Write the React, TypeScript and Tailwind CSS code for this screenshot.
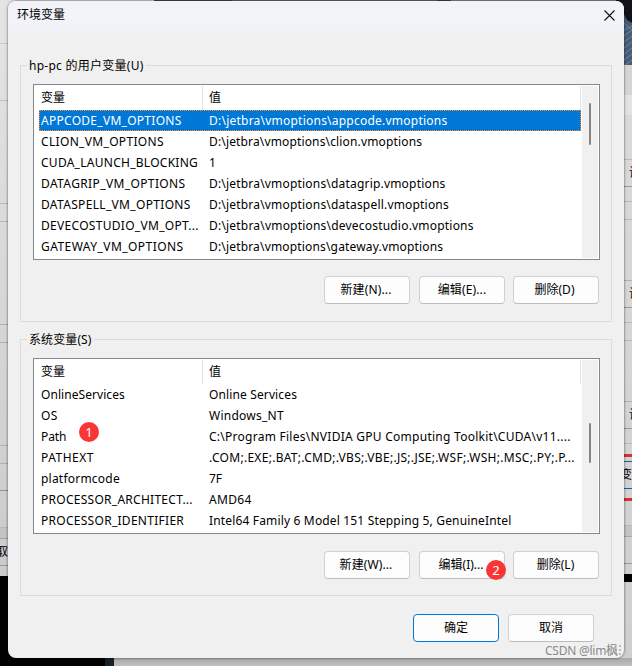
import clsx from "clsx";

type Variable = {
  name: string;
  value: string;
  nameClass?: string;
  valueClass?: string;
};

const userVariables: Variable[] = [
  {
    name: "APPCODE_VM_OPTIONS",
    value: "D:\\jetbra\\vmoptions\\appcode.vmoptions",
    nameClass: "tracking-[0.28px]",
    valueClass: "tracking-[0.23px]",
  },
  {
    name: "CLION_VM_OPTIONS",
    value: "D:\\jetbra\\vmoptions\\clion.vmoptions",
    nameClass: "tracking-[0.33px]",
    valueClass: "tracking-[0.15px]",
  },
  { name: "CUDA_LAUNCH_BLOCKING", value: "1", nameClass: "tracking-[0.27px]" },
  {
    name: "DATAGRIP_VM_OPTIONS",
    value: "D:\\jetbra\\vmoptions\\datagrip.vmoptions",
    nameClass: "tracking-[0.38px]",
    valueClass: "tracking-[0.19px]",
  },
  {
    name: "DATASPELL_VM_OPTIONS",
    value: "D:\\jetbra\\vmoptions\\dataspell.vmoptions",
    nameClass: "tracking-[0.33px]",
    valueClass: "tracking-[0.19px]",
  },
  {
    name: "DEVECOSTUDIO_VM_OPT...",
    value: "D:\\jetbra\\vmoptions\\devecostudio.vmoptions",
    nameClass: "tracking-[0.3px]",
    valueClass: "tracking-[0.2px]",
  },
  {
    name: "GATEWAY_VM_OPTIONS",
    value: "D:\\jetbra\\vmoptions\\gateway.vmoptions",
    nameClass: "tracking-[0.45px]",
    valueClass: "tracking-[0.17px]",
  },
];

const systemVariables: Variable[] = [
  {
    name: "OnlineServices",
    value: "Online Services",
    nameClass: "tracking-[0.06px]",
    valueClass: "tracking-[0.13px]",
  },
  { name: "OS", value: "Windows_NT", nameClass: "tracking-[0.4px]", valueClass: "tracking-[0.25px]" },
  {
    name: "Path",
    value: "C:\\Program Files\\NVIDIA GPU Computing Toolkit\\CUDA\\v11....",
    nameClass: "tracking-[-0.1px]",
    valueClass: "tracking-[0.26px]",
  },
  {
    name: "PATHEXT",
    value: ".COM;.EXE;.BAT;.CMD;.VBS;.VBE;.JS;.JSE;.WSF;.WSH;.MSC;.PY;.P...",
    nameClass: "tracking-[0.5px]",
    valueClass: "tracking-[0.29px]",
  },
  { name: "platformcode", value: "7F", nameClass: "tracking-[0.22px]" },
  {
    name: "PROCESSOR_ARCHITECT...",
    value: "AMD64",
    nameClass: "tracking-[0.27px]",
    valueClass: "tracking-[0.3px]",
  },
  {
    name: "PROCESSOR_IDENTIFIER",
    value: "Intel64 Family 6 Model 151 Stepping 5, GenuineIntel",
    nameClass: "tracking-[0.28px]",
    valueClass: "tracking-[0.16px]",
  },
];

const DialogButton = ({
  label,
  primary,
  className,
}: {
  label: string;
  primary?: boolean;
  className?: string;
}) => (
  <button
    type="button"
    className={clsx(
      "h-7 w-[86px] rounded border bg-[#fdfdfd] pb-px text-center leading-none whitespace-nowrap",
      primary ? "border-[#0078d4]" : "border-[#d0d0d0] border-b-[#bcbcbc]",
      className
    )}
  >
    {label}
  </button>
);

const VariableList = ({
  items,
  selected,
  thumbClass,
}: {
  items: Variable[];
  selected?: string;
  thumbClass: string;
}) => (
  <div className="flex h-44 w-[567px] border border-[#828790] bg-white p-px">
    <div className="w-[547px] pl-1">
      {/* Column headers */}
      <div className="flex h-6">
        <div className="w-[164px] border-r border-[#e5e5e5] pl-0.5 leading-[23px]">变量</div>
        <div className="w-[378px] border-r border-[#e5e5e5] pl-1.5 leading-[23px]">值</div>
      </div>
      {items.map((item) => (
        <div
          key={item.name}
          className={clsx(
            "flex h-[21px] w-[542px] leading-[22px] whitespace-pre",
            item.name === selected &&
              "bg-[#0078d7] text-white outline-1 -outline-offset-1 outline-dotted outline-[#ff8728]"
          )}
        >
          <div className="w-[170px] pl-0.5">
            <span className={item.nameClass}>{item.name}</span>
          </div>
          <div>
            <span className={item.valueClass}>{item.value}</span>
          </div>
        </div>
      ))}
    </div>
    {/* Scrollbar */}
    <div className="flex w-4 justify-center bg-[#f0f0f0]">
      <div className={clsx("w-0.5 rounded-full bg-[#858585]", thumbClass)} />
    </div>
  </div>
);

const Marker = ({ children, className }: { children: string; className: string }) => (
  <div
    className={clsx(
      "absolute flex size-5 items-center justify-center rounded-full bg-[#fb3434] text-[13px] leading-none text-white",
      className
    )}
  >
    {children}
  </div>
);

// Slices of the windows that lie behind the dialog
const Backdrop = () => (
  <div className="absolute inset-0 flex flex-col bg-[#d0d0d0]">
    <div className="flex h-[658px] justify-between">
      <div className="flex w-4 flex-col bg-linear-to-b from-[#e4e4e4] to-[#c8c8c8]">
        <div className="h-11 border-b border-[#cbcbcb]" />
        <div className="h-[57px] border-b border-[#bfbfbf]" />
        <div className="h-[103px] border-b border-[#b8b8b8]" />
        <div className="h-[18px] border-b border-[#b8b8b8]" />
        <div className="h-[103px] border-b border-[#b0b0b0]" />
        <div className="h-[18px] border-b border-[#b0b0b0]" />
        <div className="h-[103px] border-b border-[#b0b0b0]" />
        <div className="h-[18px] border-b border-[#b0b0b0]" />
        <div className="h-[27px] border-b border-[#909090]" />
        <div className="h-[37px] border-b border-[#b8b8b8]" />
        <div className="h-[11px] border-b border-[#a0a0a0] bg-[#c4c4c4]" />
        <div className="h-[27px] overflow-hidden border-b border-[#999] pt-1 leading-[18px]">
          <span className="-ml-1">取</span>
        </div>
        <div className="h-[10px]" />
        <div className="grow bg-black" />
      </div>
      <div className="flex h-px grow">
        <div className="w-[138px] bg-[#d8d8d8]" />
        <div className="w-[78px] bg-[#45404a]" />
        <div className="w-[205px] bg-[#5b6880]" />
        <div className="w-3.5 bg-[#40404e]" />
        <div className="grow bg-[#8a8890]" />
      </div>
      <div className="flex w-4 flex-col bg-linear-to-b from-[#dcdcdc] to-[#cfcfcf] pl-2">
        <svg className="-ml-2 h-[65px] w-4 shrink-0" viewBox="0 0 16 65">
          <rect width="16" height="65" fill="#485c78" />
          <path d="M0 0h16v23l-5-3-4-8-7-9z" fill="#111219" />
          <path
            d="M8 23l8 7M8 30l8-4M8 36l8-6M8 42l8-6M8 48l8-6M8 54l8-6M8 60l8-6M9 65l7-5"
            stroke="#70839c"
            strokeWidth="1"
          />
        </svg>
        <div className="h-[30px] bg-[#d5d5d5]" />
        <div className="h-5 bg-[#e3e3e3]" />
        <div className="h-[45px] border-b border-[#b8b8b8]" />
        <div className="h-[27px] overflow-hidden border-b border-[#999] pl-[5px] leading-[25px]">设</div>
        <div className="h-[15px] border-b border-[#b8b8b8]" />
        <div className="h-[18px] border-b border-[#b8b8b8]" />
        <div className="h-[61px] border-b border-[#b0b0b0]" />
        <div className="h-[27px] overflow-hidden border-b border-[#999] pl-[5px] leading-[25px]">设</div>
        <div className="h-[15px] border-b border-[#b8b8b8]" />
        <div className="h-[18px] border-b border-[#b8b8b8]" />
        <div className="h-[61px] border-b border-[#b0b0b0]" />
        <div className="h-[27px] overflow-hidden border-b border-[#999] pl-[5px] leading-[25px]">设</div>
        <div className="h-[15px] border-b border-[#b8b8b8]" />
        <div className="h-[10px]" />
        <div className="h-[3px] bg-[#dc2f33]" />
        <div className="h-1" />
        <div className="h-7 overflow-hidden border-y border-[#1464a8] leading-[26px]">
          <span className="-ml-1">变</span>
        </div>
        <div className="h-[9px]" />
        <div className="h-[3px] bg-[#dc2f33]" />
        <div className="h-[25px] border-b border-[#b8b8b8]" />
        <div className="h-[11px] border-b border-[#a8a8a8] bg-[#c4c4c4]" />
        <div className="h-[27px] border-b border-[#999]" />
        <div className="h-[10px]" />
        <div className="h-2 bg-black" />
      </div>
    </div>
    <div className="flex h-2">
      <div className="w-[105px] bg-black" />
      <div className="w-[9px] bg-[#17212b]" />
      <div className="grow bg-linear-to-b from-[#a9a9a9] to-[#c0c0c0]" />
    </div>
  </div>
);

export default function App() {
  return (
    <div className="relative h-[666px] w-[632px] overflow-hidden pt-px pl-2 font-['Noto_Sans','Noto_Sans_CJK_SC',sans-serif] text-[12px] text-black">
      <Backdrop />
      <div className="relative flex h-[657px] w-[616px] flex-col rounded-lg bg-[#f0f0f0] shadow-[0_0_2px_1px_rgba(0,0,0,0.3)]">
        {/* Title bar */}
        <div className="flex h-[30px] shrink-0 items-center justify-between rounded-t-lg bg-[#f1f3f9] pr-[9px] pb-0.5 pl-[9px]">
          <span>环境变量</span>
          <svg className="mt-px size-[11px]" viewBox="0 0 11 11" fill="none" stroke="#111" strokeWidth="1.1">
            <path d="M.5.5l10 10M10.5.5l-10 10" />
          </svg>
        </div>

        {/* User variables */}
        <section className="relative mt-[34px] ml-3 h-[257px] w-[592px] shrink-0 border border-[#dcdcdc] pt-[18px] pl-3">
          <h2 className="absolute -top-2 left-1.5 bg-[#f0f0f0] px-0.5 leading-4 tracking-[0.26px] whitespace-nowrap">
            hp-pc 的用户变量(U)
          </h2>
          <VariableList items={userVariables} selected="APPCODE_VM_OPTIONS" thumbClass="mt-[17px] h-[42px]" />
          <div className="mt-4 ml-[291px] flex gap-[9px]">
            <DialogButton label="新建(N)..." className="pr-0.5 tracking-[0.15px]" />
            <DialogButton label="编辑(E)..." className="tracking-[0.15px]" />
            <DialogButton label="删除(D)" className="-ml-px pr-[3px]" />
          </div>
        </section>

        {/* System variables */}
        <section className="relative mt-[17px] ml-3 h-[257px] w-[592px] shrink-0 border border-[#dcdcdc] pt-[18px] pl-3">
          <h2 className="absolute -top-2 left-1.5 bg-[#f0f0f0] px-0.5 leading-4 tracking-[0.1px] whitespace-nowrap">
            系统变量(S)
          </h2>
          <VariableList items={systemVariables} thumbClass="mt-[63px] h-10" />
          <div className="mt-[17px] ml-[291px] flex gap-[9px]">
            <DialogButton label="新建(W)..." className="pr-0.5 tracking-[0.1px]" />
            <DialogButton label="编辑(I)..." className="pr-0.5" />
            <DialogButton label="删除(L)" className="-ml-px pr-px" />
          </div>
          <Marker className="top-[82px] left-[58px]">1</Marker>
          <Marker className="top-[220px] left-[465px]">2</Marker>
        </section>

        <div className="mt-[18px] ml-[405px] flex gap-[9px]">
          <DialogButton label="确定" primary />
          <DialogButton label="取消" />
        </div>

        {/* Size grip and watermark */}
        <svg className="absolute right-[3px] bottom-[3px] size-2.5" viewBox="0 0 10 10" fill="#bdbdbd">
          <path d="M8 0h2v2H8zM8 4h2v2H8zM4 4h2v2H4zM8 8h2v2H8zM4 8h2v2H4zM0 8h2v2H0z" />
        </svg>
        <div className="absolute -bottom-px left-[537px] leading-4 tracking-[-0.25px] whitespace-nowrap text-[#8a8a8a]">
          CSDN @lim枫
        </div>
      </div>
    </div>
  );
}
